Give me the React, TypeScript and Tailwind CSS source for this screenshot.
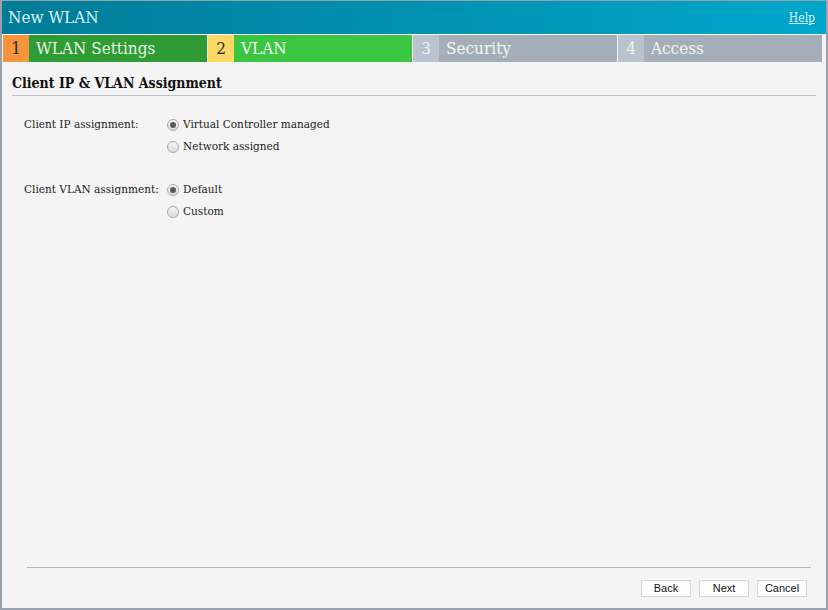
import React from 'react'

const serif = { fontFamily: '"DejaVu Serif", "Liberation Serif", serif' }

const steps = [
  { n: '1', label: 'WLAN Settings', num: 'bg-[#f7953d] text-[#2a2a2a]', body: 'bg-[#2f9b33] text-[#e6f5e6]' },
  { n: '2', label: 'VLAN', num: 'bg-[#fdd867] text-[#2a2a2a]', body: 'bg-[#3ac641] text-[#eefbee]' },
  { n: '3', label: 'Security', num: 'bg-[#b9c3cd] text-[#eef1f4]', body: 'bg-[#a3aeb8] text-[#f3f5f7]' },
  { n: '4', label: 'Access', num: 'bg-[#b9c3cd] text-[#eef1f4]', body: 'bg-[#a3aeb8] text-[#f3f5f7]' },
]

function Radio({ checked, label }: { checked?: boolean; label: string }) {
  return (
    <div className="flex h-[22px] items-center gap-[4px]">
      <span className="flex h-[12px] w-[12px] items-center justify-center rounded-full border border-[#a9a9a9] bg-gradient-to-b from-[#f6f6f6] to-[#dcdcdc]">
        {checked && <span className="h-[6px] w-[6px] rounded-full bg-[#5a5a5a]" />}
      </span>
      <span className="whitespace-nowrap text-[11.7px] text-[#222]">{label}</span>
    </div>
  )
}

function Row({ label, options }: { label: string; options: { label: string; checked?: boolean }[] }) {
  return (
    <div className="flex">
      <div className="flex h-[22px] w-[143px] items-center whitespace-nowrap text-[11.7px] text-[#222]">{label}</div>
      <div className="flex flex-col">
        {options.map((o) => (
          <Radio key={o.label} label={o.label} checked={o.checked} />
        ))}
      </div>
    </div>
  )
}

function Btn({ children }: { children: React.ReactNode }) {
  return (
    <button
      className="h-[17px] w-[50px] border border-[#d6d6d6] bg-white text-[11px] leading-none text-[#111]"
      style={{ fontFamily: '"Liberation Sans", Arial, sans-serif', fontStretch: 'normal' }}
    >
      {children}
    </button>
  )
}

export default function App() {
  return (
    <div
      className="flex h-[610px] w-[828px] flex-col border-x-2 border-b-2 border-t border-[#98a1a9] bg-[#f4f4f4] font-stretch-condensed"
      style={serif}
    >
      <div className="flex h-[33px] shrink-0 items-center justify-between bg-gradient-to-r from-[#007c98] to-[#00a7cb] pl-[6px] pr-[11px]">
        <span className="text-[17px] text-[#def3f8]">New WLAN</span>
        <a className="text-[12px] text-[#def3f8] underline">Help</a>
      </div>
      <div className="ml-[1px] mr-[4px] flex h-[28px] shrink-0 gap-px border-t border-white">
        {steps.map((s) => (
          <div key={s.n} className="flex flex-1 bg-white">
            <div className={'flex w-[26px] items-center justify-center text-[17px] ' + s.num}>{s.n}</div>
            <div className={'flex flex-1 items-center pl-[7px] text-[17px] ' + s.body}>{s.label}</div>
          </div>
        ))}
      </div>
      <div className="mx-[10px] mt-[11px] border-b border-[#b8c0c8] pb-[1px] text-[14px] font-bold text-[#111]">
        Client IP &amp; VLAN Assignment
      </div>
      <div className="ml-[22px] mt-[18px] flex flex-col gap-[21px]">
        <Row
          label="Client IP assignment:"
          options={[{ label: 'Virtual Controller managed', checked: true }, { label: 'Network assigned' }]}
        />
        <Row label="Client VLAN assignment:" options={[{ label: 'Default', checked: true }, { label: 'Custom' }]} />
      </div>
      <div className="flex-1" />
      <div className="ml-[25px] mr-[15px] border-t border-[#b0b8bf]" />
      <div className="flex justify-end gap-[8px] pb-[11px] pr-[19px] pt-[12px]">
        <Btn>Back</Btn>
        <Btn>Next</Btn>
        <Btn>Cancel</Btn>
      </div>
    </div>
  )
}
